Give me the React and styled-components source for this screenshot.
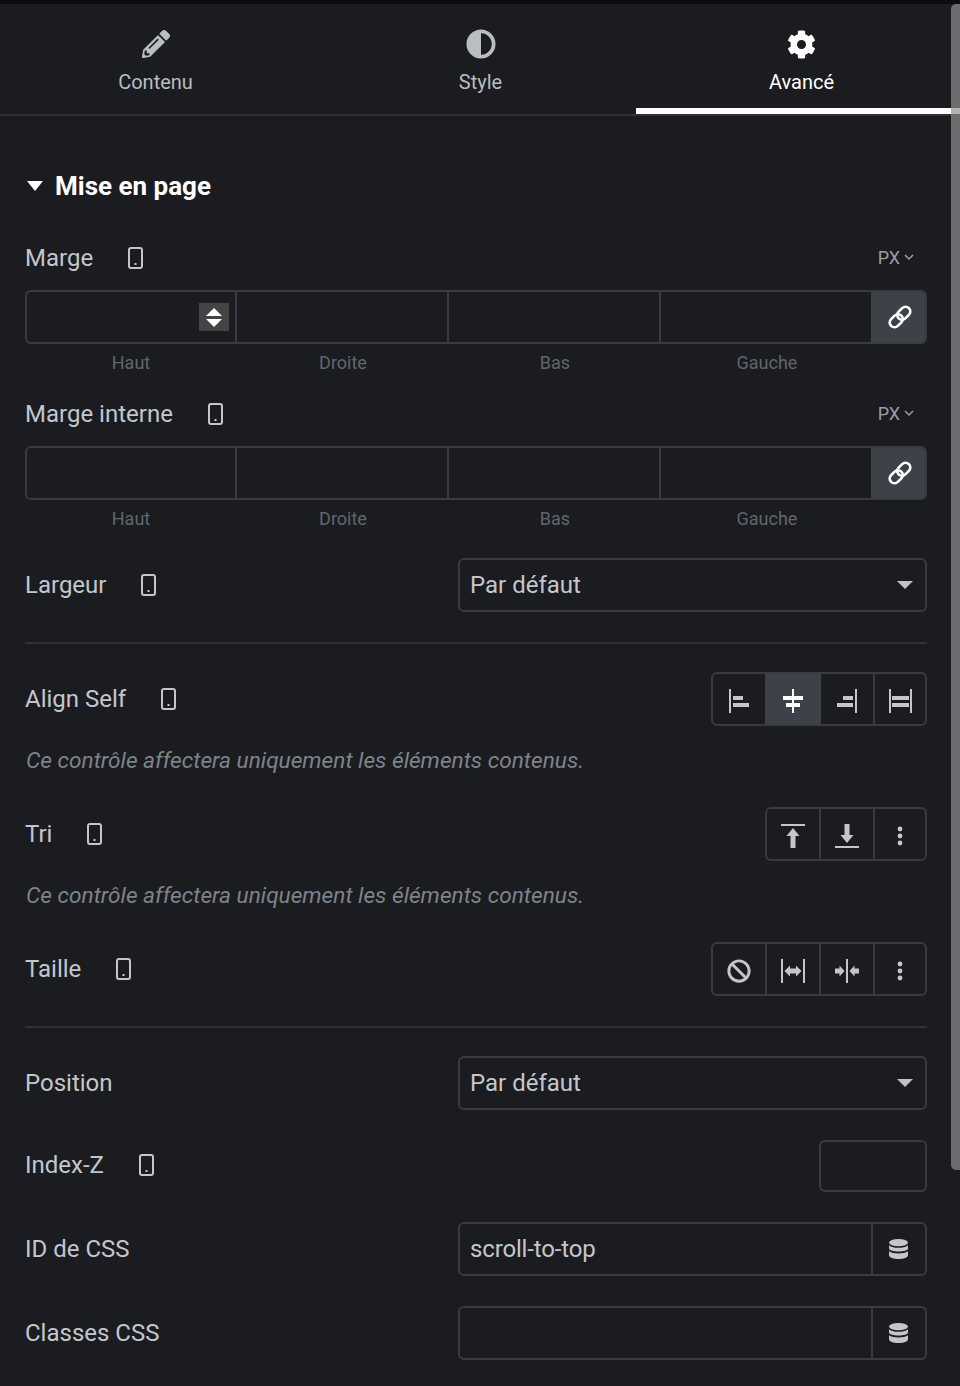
import React from 'react';
import styled, { createGlobalStyle } from 'styled-components';
import { FaPencilAlt, FaAdjust, FaCog, FaBan } from 'react-icons/fa';

const GlobalStyle = createGlobalStyle`
  html, body {
    margin: 0;
    background: #1b1c1f;
  }
  body {
    font-family: Roboto, "Liberation Sans", sans-serif;
  }
`;

const Shell = styled.div`
  width: 960px;
  height: 1386px;
  box-sizing: border-box;
  border-top: 4px solid #0c0d0f;
  background: #1b1c1f;
  display: flex;
  overflow: hidden;
`;

const Panel = styled.div`
  width: 951px;
  flex: none;
`;

const Track = styled.div`
  width: 9px;
  flex: none;
  position: relative;
  z-index: 2;
`;

const Thumb = styled.div`
  width: 9px;
  height: 1166px;
  background: rgba(147, 147, 147, 0.69);
  border-radius: 5px 0 0 5px;
`;

const Tabs = styled.div`
  display: grid;
  grid-template-columns: 311px 339px 303px;
  height: 112px;
  box-sizing: border-box;
  border-bottom: 2px solid #2f3135;
`;

const Tab = styled.div`
  position: relative;
  display: flex;
  flex-direction: column;
  align-items: center;
  padding-top: 25px;
  gap: 9px;
  font-size: 20px;
  line-height: 28px;
  color: ${p => (p.$active ? '#ffffff' : '#b9bdc4')};

  ${p => p.$active && `
    &::after {
      content: '';
      position: absolute;
      left: -14px;
      right: -7px;
      bottom: 0;
      height: 6px;
      background: #ffffff;
    }
  `}
`;

const TabIcon = styled.span`
  height: 30px;
  display: flex;
  align-items: center;
  justify-content: center;

  svg {
    width: ${p => p.$size}px;
    height: ${p => p.$size}px;
    display: block;
  }
`;

const Body = styled.div`
  padding: 0 24px 0 25px;
`;

const SectionTitle = styled.div`
  margin-top: 54px;
  height: 32px;
  display: flex;
  align-items: center;
  gap: 12px;
  font-size: 26px;
  font-weight: 700;
  color: #ffffff;
`;

const Caret = styled.span`
  width: 0;
  height: 0;
  margin-left: 2px;
  border-left: 8px solid transparent;
  border-right: 8px solid transparent;
  border-top: 10px solid #ffffff;
`;

const HeaderRow = styled.div`
  margin-top: ${p => p.$mt}px;
  height: 32px;
  display: flex;
  align-items: center;
  justify-content: space-between;
`;

const ControlRow = styled.div`
  margin-top: ${p => p.$mt}px;
  display: flex;
  align-items: center;
  justify-content: space-between;
`;

const LabelWrap = styled.div`
  display: flex;
  align-items: center;
  gap: 35px;
  padding-bottom: ${p => (p.$lift ? 2 : 0)}px;
`;

const Label = styled.span`
  font-size: 24px;
  line-height: 32px;
  color: #c3c7cd;
`;

const Units = styled.span`
  display: flex;
  align-items: center;
  gap: 3px;
  padding: 0 12px 2px 0;
  font-size: 18px;
  color: #9a9ea6;
`;

const LinkedBox = styled.div`
  margin-top: 16px;
  height: 54px;
  box-sizing: border-box;
  display: grid;
  grid-template-columns: 210px 212px 212px 210px 54px;
  border: 2px solid #383c42;
  border-radius: 6px;
  overflow: hidden;
`;

const LinkedCell = styled.div`
  display: flex;
  align-items: center;
  justify-content: flex-end;
  padding-right: 6px;
  border-right: ${p => (p.$plain ? '0' : '2px solid #383c42')};
`;

const LinkButton = styled.div`
  display: flex;
  align-items: center;
  justify-content: center;
  padding-left: 3px;
  background: #3d4148;
  color: #ffffff;
`;

const LinkSvg = styled.svg`
  width: 24px;
  height: 24px;
  display: block;
`;

const Stepper = styled.div`
  width: 30px;
  height: 28px;
  background: #444444;
  display: flex;
  flex-direction: column;
  align-items: center;
  justify-content: center;
  gap: 3px;
`;

const StepTriangle = styled.span`
  width: 0;
  height: 0;
  border-left: 8px solid transparent;
  border-right: 8px solid transparent;
  ${p => (p.$down ? 'border-top: 8px solid #fff;' : 'border-bottom: 8px solid #fff;')}
`;

const SubLabels = styled.div`
  margin-top: 8px;
  height: 22px;
  display: grid;
  grid-template-columns: 212px 212px 212px 212px;
`;

const SubLabel = styled.span`
  text-align: center;
  font-size: 18px;
  line-height: 22px;
  color: #5f666f;
`;

const Field = styled.div`
  width: ${p => p.$w}px;
  height: ${p => p.$h || 54}px;
  box-sizing: border-box;
  display: flex;
  align-items: center;
  justify-content: space-between;
  border: 2px solid #383c42;
  border-radius: 6px;
  font-size: 24px;
  color: #c3c7cd;
`;

const FieldText = styled.span`
  padding-left: 10px;
  letter-spacing: ${p => p.$tight || 0}px;
`;

const SelectArrow = styled.span`
  width: 0;
  height: 0;
  margin-right: 12px;
  border-left: 8.5px solid transparent;
  border-right: 8.5px solid transparent;
  border-top: 8px solid #bfc3c9;
`;

const DynamicTag = styled.div`
  width: 54px;
  height: 100%;
  box-sizing: border-box;
  flex: none;
  display: flex;
  align-items: center;
  justify-content: center;
  padding-right: 2px;
  border-left: 2px solid #383c42;
  color: #c3c7cd;
`;

const DatabaseSvg = styled.svg`
  width: 19px;
  height: 20px;
  display: block;
`;

const Divider = styled.div`
  margin-top: 30px;
  height: 2px;
  background: #2f3135;
`;

const Help = styled.div`
  margin-top: 20px;
  height: 30px;
  padding-left: 1px;
  font-size: 22.65px;
  line-height: 30px;
  font-style: italic;
  color: #7d838b;
`;

const ButtonGroup = styled.div`
  display: flex;
  height: 54px;
  box-sizing: border-box;
  border: 2px solid #383c42;
  border-radius: 6px;
  overflow: hidden;
`;

const GroupButton = styled.div`
  width: ${p => p.$w || 54}px;
  box-sizing: border-box;
  flex: none;
  display: flex;
  align-items: center;
  justify-content: center;
  padding-top: 4px;
  color: ${p => (p.$active ? '#ffffff' : '#c3c7cd')};
  background: ${p => (p.$active ? '#3d4148' : 'transparent')};
  border-right: ${p => (p.$w ? '0' : '2px solid #383c42')};

  svg {
    width: 24px;
    height: 24px;
    display: block;
  }
`;

const Icon = ({ children }) => (
  <svg viewBox="0 0 24 24" fill="currentColor" aria-hidden="true">{children}</svg>
);

const MobileSvg = styled.svg`
  width: 15px;
  height: 22px;
  display: block;
  color: #c3c7cd;
`;

const MobileIcon = () => (
  <MobileSvg viewBox="0 0 15 22" aria-hidden="true">
    <rect x="1" y="1" width="13" height="20" rx="2" fill="none" stroke="currentColor" strokeWidth="2" />
    <rect x="6.5" y="16" width="2" height="2" fill="currentColor" />
  </MobileSvg>
);

const ChevronSvg = styled.svg`
  width: 12px;
  height: 12px;
  display: block;
`;

const Chevron = () => (
  <ChevronSvg viewBox="0 0 12 12" aria-hidden="true">
    <path d="M2 4 L6 8 L10 4" fill="none" stroke="currentColor" strokeWidth="1.5" />
  </ChevronSvg>
);

const LinkIcon = () => (
  <LinkSvg viewBox="0 0 24 24" aria-hidden="true" fill="none" stroke="currentColor" strokeWidth="2.7">
    <rect x="1" y="11" width="14.5" height="9.5" rx="4.75" transform="rotate(-45 8.25 15.75)" />
    <rect x="8.5" y="3.5" width="14.5" height="9.5" rx="4.75" transform="rotate(-45 15.75 8.25)" />
  </LinkSvg>
);

const DatabaseIcon = () => (
  <DatabaseSvg viewBox="0 0 19 20" aria-hidden="true" fill="currentColor">
    <ellipse cx="9.5" cy="3.6" rx="9.5" ry="3.6" />
    <path d="M0 6.2 C2 8.2 6 8.8 9.5 8.8 C13 8.8 17 8.2 19 6.2 V9.4 C19 11.2 14.5 12.4 9.5 12.4 C4.5 12.4 0 11.2 0 9.4 Z" />
    <path d="M0 12.2 C2 13.8 6 14.4 9.5 14.4 C13 14.4 17 13.8 19 12.2 V16.2 C19 18.4 14.5 20 9.5 20 C4.5 20 0 18.4 0 16.2 Z" />
  </DatabaseSvg>
);

const AlignStart = () => (
  <Icon>
    <rect x="2" y="0" width="2" height="24" />
    <rect x="6" y="7" width="10" height="4" />
    <rect x="6" y="14" width="16" height="4" />
  </Icon>
);
const AlignCenter = () => (
  <Icon>
    <rect x="11" y="0" width="2" height="24" />
    <rect x="2" y="7" width="20" height="4" />
    <rect x="5" y="14" width="14" height="4" />
  </Icon>
);
const AlignEnd = () => (
  <Icon>
    <rect x="20" y="0" width="2" height="24" />
    <rect x="8" y="7" width="10" height="4" />
    <rect x="2" y="14" width="16" height="4" />
  </Icon>
);
const AlignStretch = () => (
  <Icon>
    <rect x="1" y="0" width="2" height="24" />
    <rect x="22" y="0" width="2" height="24" />
    <rect x="4" y="7" width="17" height="4" />
    <rect x="4" y="14" width="17" height="4" />
  </Icon>
);
const OrderStart = () => (
  <Icon>
    <rect x="0" y="0" width="24" height="2" />
    <path d="M12 4 L18.5 12 L14.5 12 L14.5 24 L9.5 24 L9.5 12 L5.5 12 Z" />
  </Icon>
);
const OrderEnd = () => (
  <Icon>
    <rect x="0" y="22" width="24" height="2" />
    <path d="M9.5 0 L14.5 0 L14.5 11 L18.5 11 L12 19 L5.5 11 L9.5 11 Z" />
  </Icon>
);
const Dots = () => (
  <Icon>
    <circle cx="12" cy="5" r="2.4" />
    <circle cx="12" cy="12" r="2.4" />
    <circle cx="12" cy="19" r="2.4" />
  </Icon>
);
const Grow = () => (
  <Icon>
    <rect x="0" y="0" width="2" height="24" />
    <rect x="22" y="0" width="2" height="24" />
    <path d="M3.5 12 L9 6.5 L9 9.5 L15 9.5 L15 6.5 L20.5 12 L15 17.5 L15 14.5 L9 14.5 L9 17.5 Z" />
  </Icon>
);
const Shrink = () => (
  <Icon>
    <rect x="11" y="0" width="2" height="24" />
    <path d="M9.5 12 L4.5 6.5 L4.5 9.5 L0 9.5 L0 14.5 L4.5 14.5 L4.5 17.5 Z" />
    <path d="M14.5 12 L19.5 6.5 L19.5 9.5 L24 9.5 L24 14.5 L19.5 14.5 L19.5 17.5 Z" />
  </Icon>
);

const LinkedDimensions = ({ stepper }) => (
  <LinkedBox>
    <LinkedCell>
      {stepper && (
        <Stepper>
          <StepTriangle />
          <StepTriangle $down />
        </Stepper>
      )}
    </LinkedCell>
    <LinkedCell />
    <LinkedCell />
    <LinkedCell $plain />
    <LinkButton><LinkIcon /></LinkButton>
  </LinkedBox>
);

const Sides = () => (
  <SubLabels>
    <SubLabel>Haut</SubLabel>
    <SubLabel>Droite</SubLabel>
    <SubLabel>Bas</SubLabel>
    <SubLabel>Gauche</SubLabel>
  </SubLabels>
);

const HELP = 'Ce contrôle affectera uniquement les éléments contenus.';

export default function App() {
  return (
    <>
      <GlobalStyle />
      <Shell>
        <Panel>
          <Tabs>
            <Tab><TabIcon $size={28}><FaPencilAlt /></TabIcon>Contenu</Tab>
            <Tab><TabIcon $size={30}><FaAdjust /></TabIcon>Style</Tab>
            <Tab $active><TabIcon $size={29}><FaCog /></TabIcon>Avancé</Tab>
          </Tabs>
          <Body>
            <SectionTitle><Caret />Mise en page</SectionTitle>

            <HeaderRow $mt={40}>
              <LabelWrap><Label>Marge</Label><MobileIcon /></LabelWrap>
              <Units>PX<Chevron /></Units>
            </HeaderRow>
            <LinkedDimensions stepper />
            <Sides />

            <HeaderRow $mt={24}>
              <LabelWrap><Label>Marge interne</Label><MobileIcon /></LabelWrap>
              <Units>PX<Chevron /></Units>
            </HeaderRow>
            <LinkedDimensions />
            <Sides />

            <ControlRow $mt={28}>
              <LabelWrap><Label>Largeur</Label><MobileIcon /></LabelWrap>
              <Field $w={469}><FieldText>Par défaut</FieldText><SelectArrow /></Field>
            </ControlRow>
            <Divider />

            <ControlRow $mt={28}>
              <LabelWrap><Label>Align Self</Label><MobileIcon /></LabelWrap>
              <ButtonGroup>
                <GroupButton $w={52}><AlignStart /></GroupButton>
                <GroupButton $w={56} $active><AlignCenter /></GroupButton>
                <GroupButton><AlignEnd /></GroupButton>
                <GroupButton $w={50}><AlignStretch /></GroupButton>
              </ButtonGroup>
            </ControlRow>
            <Help>{HELP}</Help>

            <ControlRow $mt={31}>
              <LabelWrap><Label>Tri</Label><MobileIcon /></LabelWrap>
              <ButtonGroup>
                <GroupButton><OrderStart /></GroupButton>
                <GroupButton><OrderEnd /></GroupButton>
                <GroupButton $w={50}><Dots /></GroupButton>
              </ButtonGroup>
            </ControlRow>
            <Help>{HELP}</Help>

            <ControlRow $mt={31}>
              <LabelWrap><Label>Taille</Label><MobileIcon /></LabelWrap>
              <ButtonGroup>
                <GroupButton><FaBan /></GroupButton>
                <GroupButton><Grow /></GroupButton>
                <GroupButton><Shrink /></GroupButton>
                <GroupButton $w={50}><Dots /></GroupButton>
              </ButtonGroup>
            </ControlRow>
            <Divider />

            <ControlRow $mt={28}>
              <Label>Position</Label>
              <Field $w={469}><FieldText>Par défaut</FieldText><SelectArrow /></Field>
            </ControlRow>

            <ControlRow $mt={30}>
              <LabelWrap $lift><Label>Index-Z</Label><MobileIcon /></LabelWrap>
              <Field $w={108} $h={52} />
            </ControlRow>

            <ControlRow $mt={30}>
              <Label>ID de CSS</Label>
              <Field $w={469}>
                <FieldText $tight={-0.15}>scroll-to-top</FieldText>
                <DynamicTag><DatabaseIcon /></DynamicTag>
              </Field>
            </ControlRow>

            <ControlRow $mt={30}>
              <Label>Classes CSS</Label>
              <Field $w={469}>
                <FieldText />
                <DynamicTag><DatabaseIcon /></DynamicTag>
              </Field>
            </ControlRow>
          </Body>
        </Panel>
        <Track><Thumb /></Track>
      </Shell>
    </>
  );
}
